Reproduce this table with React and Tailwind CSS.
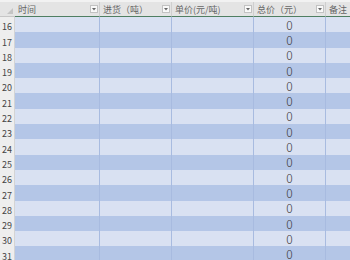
import React from "react";

const cols = [
  { label: "时间", w: "w-[85px]" },
  { label: "进货（吨）", w: "w-[72px]" },
  { label: "单价(元/吨)", w: "w-[82px]" },
  { label: "总价（元）", w: "w-[72px]" },
  { label: "备注", w: "flex-1" },
];

const rows = Array.from({ length: 16 }, (_, i) => 16 + i);

// small filter button at the right of each header cell
const Drop = () => (
  <span className="absolute right-[1px] top-[3px] w-[8px] h-[8px] bg-[#f9f9f9] border border-[#c2c2c2] flex items-center justify-center">
    <svg width="4" height="3" viewBox="0 0 4 3">
      <path d="M0 0 L4 0 L2 2.5 Z" fill="#666" />
    </svg>
  </span>
);

export default function App() {
  return (
    <div
      className="w-[350px] h-[260px] overflow-hidden bg-[#eeeeee]"
      style={{ fontFamily: '"Noto Sans CJK SC", "Noto Sans", sans-serif' }}
    >
      {/* Header */}
      <div className="flex h-[17px] bg-[#f2f2f2] pt-[2px]">
        <div className="w-[15px] shrink-0 h-[15px] bg-[#e4e4e4] border-b border-[#c6c6c6] relative">
          <svg className="absolute right-[2px] bottom-[2px]" width="6" height="6" viewBox="0 0 6 6">
            <path d="M6 0 L6 6 L0 6 Z" fill="#c4c4c4" />
          </svg>
        </div>
        {cols.map((c, i) => (
          <div
            key={i}
            className={`${c.w} shrink-0 h-[15px] bg-[#e4e4e4] border-b border-[#4f7f62] relative flex items-center pl-[3px] text-[9px] leading-none text-[#666] whitespace-nowrap ${i < 4 ? "border-r border-r-[#cfcfcf]" : ""}`}
          >
            {c.label}
            {i < 4 && <Drop />}
          </div>
        ))}
      </div>

      {/* Rows */}
      {rows.map((n, r) => (
        <div key={n} className="flex h-[15.3px] overflow-hidden">
          <div className="w-[15px] shrink-0 bg-[#eeeeee] border-r border-[#d4d4d4] flex items-end justify-end pr-[2px] pb-[1px] text-[9px] leading-none text-[#444] overflow-hidden">
            {n}
          </div>
          {cols.map((c, i) => (
            <div
              key={i}
              className={`${c.w} shrink-0 ${r % 2 === 0 ? "bg-[#d9e1f2]" : "bg-[#b4c6e7]"} ${i < 4 ? "border-r border-[#a8bbe0]" : ""} flex items-center justify-center text-[12px] leading-[12px] font-light text-[#3a3a3a] overflow-hidden`}
            >
              {i === 3 ? "0" : ""}
            </div>
          ))}
        </div>
      ))}
    </div>
  );
}
